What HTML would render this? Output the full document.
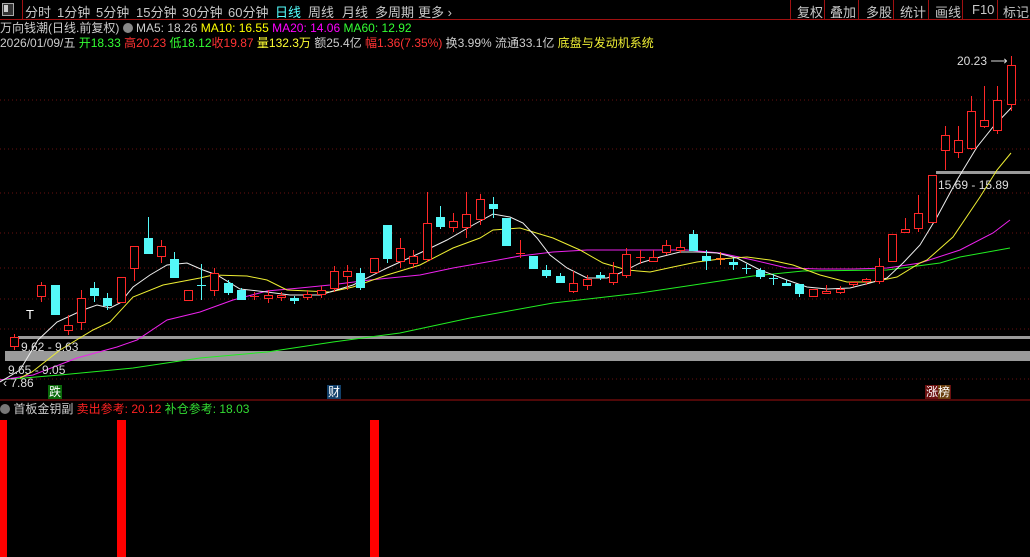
<!DOCTYPE html>
<html><head><meta charset="utf-8">
<style>
html,body{margin:0;padding:0;background:#000;width:1030px;height:557px;overflow:hidden;font-family:"Liberation Sans","Noto Sans CJK SC",sans-serif;}
.t{position:absolute;white-space:nowrap;font-size:12px;line-height:14px;}
#top{position:absolute;left:0;top:0;width:1030px;height:19px;border-bottom:1px solid #a01010;}
#top span{position:absolute;top:2px;font-size:13px;color:#c8c8c8;}
.rb{position:absolute;top:0;height:19px;border-left:1px solid #a01010;}
svg{shape-rendering:crispEdges}
</style></head><body>
<div id="top">
<div style="position:absolute;left:2px;top:3px;width:10px;height:11px;border:1px solid #aaa;background:#333"></div>
<div style="position:absolute;left:4px;top:5px;width:4px;height:7px;background:#ccc"></div>
<div class="rb" style="left:22px"></div>
<span style="left:25px">分时</span><span style="left:57px">1分钟</span><span style="left:96px">5分钟</span><span style="left:136px">15分钟</span><span style="left:182px">30分钟</span><span style="left:228px">60分钟</span><span style="left:275px;color:#5ff">日线</span><span style="left:308px">周线</span><span style="left:342px">月线</span><span style="left:375px">多周期</span><span style="left:418px">更多 ›</span>
<div class="rb" style="left:790px"></div><span style="left:797px">复权</span>
<div class="rb" style="left:824px"></div><span style="left:830px">叠加</span>
<div class="rb" style="left:858px"></div><span style="left:866px">多股</span>
<div class="rb" style="left:893px"></div><span style="left:900px">统计</span>
<div class="rb" style="left:928px"></div><span style="left:935px">画线</span>
<div class="rb" style="left:962px"></div><span style="left:972px">F10</span>
<div class="rb" style="left:997px"></div><span style="left:1003px">标记</span>
</div>
<div class="t" style="left:0;top:21px;color:#ccc">万向钱潮(日线.前复权) <span style="display:inline-block;width:10px;height:10px;border-radius:5px;background:#888;vertical-align:-1px"></span> MA5: 18.26 <span style="color:#ff0">MA10: 16.55</span> <span style="color:#f0f">MA20: 14.06</span> <span style="color:#3f3">MA60: 12.92</span></div>
<div class="t" style="left:0;top:36px;color:#ccc">2026/01/09/五 <span style="color:#3f3">开18.33</span> <span style="color:#f33">高20.23</span> <span style="color:#3f3">低18.12</span><span style="color:#f33">收19.87</span> <span style="color:#ff3">量132.3万</span> 额25.4亿 <span style="color:#f33">幅1.36(7.35%)</span> 换3.99% 流通33.1亿 <span style="color:#ee3">底盘与发动机系统</span></div>
<svg id="s" width="1030" height="557" style="position:absolute;left:0;top:0"></svg>
<div class="t" style="left:26px;top:308px;color:#fff;font-size:13px">T</div>
<div class="t" style="left:21px;top:340px;color:#ddd">9.62 - 9.63</div>
<div class="t" style="left:8px;top:363px;color:#ddd">9.65 - 9.05</div>
<div class="t" style="left:3px;top:376px;color:#ddd">‹ 7.86</div>
<div class="t" style="left:48px;top:385px;color:#fff;background:#0a6a0a;padding:0 1px">跌</div>
<div class="t" style="left:327px;top:385px;color:#fff;background:#12406a;padding:0 1px">财</div>
<div class="t" style="left:925px;top:385px;color:#fff;background:#6a1010;padding:0 1px">涨<span style="background:#6a4010">榜</span></div>
<div class="t" style="left:957px;top:54px;color:#ddd">20.23 ⟶</div>
<div class="t" style="left:938px;top:178px;color:#ddd">15.69 - 15.89</div>
<div class="t" style="left:0;top:402px;color:#ccc"><span style="display:inline-block;width:10px;height:10px;border-radius:5px;background:#777;vertical-align:-1px"></span> 首板金钥副 <span style="color:#f22">卖出参考: 20.12</span> <span style="color:#3d3">补仓参考: 18.03</span></div>
<script>
var s='';
[100,149,193,233,268,299,329,379].forEach(function(y){s+='<line x1="0" y1="'+y+'" x2="1030" y2="'+y+'" stroke="#6a1010" stroke-dasharray="1,3"/>';});
s+='<rect x="18" y="336" width="1012" height="3" fill="#9a9a9a"/>';
s+='<rect x="5" y="351" width="1025" height="10" fill="#9a9a9a"/>';
s+='<rect x="936" y="171" width="94" height="3" fill="#9a9a9a"/>';
s+='<line x1="0" y1="400" x2="1030" y2="400" stroke="#a01010"/>';
s+='<rect x="0" y="420" width="7" height="137" fill="#f00"/><rect x="117" y="420" width="9" height="137" fill="#f00"/><rect x="370" y="420" width="9" height="137" fill="#f00"/>';
function pl(pts,c){s+='<polyline fill="none" stroke="'+c+'" stroke-width="1" style="shape-rendering:auto" points="'+pts+'"/>';}
pl('0,380 60,375 133,368 200,358 267,352 333,342 400,333 470,318 553,303 640,293 687,286 753,276 803,271 887,270 940,263 960,257 1010,248','#2e2');
pl('0,380 33,375 77,358 117,347 137,340 167,320 200,312 233,300 267,291 300,288 330,285 370,280 420,275 453,268 487,262 520,256 553,252 587,250 640,250 687,250 720,253 753,260 787,268 820,269 853,269 887,268 920,263 960,250 993,233 1010,220','#e2e');
pl('20,378 32,372 60,350 93,330 110,322 133,297 163,285 200,278 213,275 247,276 267,280 287,290 330,292 353,287 387,275 420,265 453,248 480,238 493,230 520,228 553,238 580,250 603,263 627,270 650,272 673,267 697,262 720,259 747,257 770,260 793,265 820,275 847,282 873,282 897,277 920,263 927,260 953,237 980,197 997,170 1011,153','#ee3');
pl('0,382 20,370 38,340 57,322 83,310 97,305 110,308 120,303 133,287 150,275 167,265 187,263 203,270 217,275 240,289 267,292 290,295 320,295 353,285 387,268 420,253 447,240 473,225 493,214 510,217 523,223 537,238 550,255 567,268 587,278 607,278 620,273 640,263 660,257 680,252 697,252 717,253 737,258 760,270 787,280 807,287 827,289 850,288 870,283 887,278 903,263 920,245 937,217 957,180 977,147 993,127 1012,107','#eee');
var R='#ff2828',C='#54f8f8';
var c=[[14,334,337,347,350,R],[41,282,285,297,302,R],[55,285,285,315,315,C],[68,315,325,331,335,R],[81,290,298,323,330,R],[94,282,288,296,302,C],[107,293,298,306,310,C],[121,277,277,303,303,R],[134,246,246,269,281,R],[148,217,238,254,254,C],[161,240,246,257,263,R],[174,252,259,278,278,C],[188,290,290,301,301,R],[201,264,285,286,300,C],[214,268,273,291,296,R],[228,280,283,293,295,C],[241,288,290,300,300,C],[254,292,296,297,300,R],[268,290,295,299,303,R],[281,292,295,298,301,R],[294,296,298,301,304,C],[307,290,294,298,300,R],[321,286,290,295,298,R],[334,266,271,289,292,R],[347,265,271,277,290,R],[360,268,273,288,290,C],[374,258,258,273,273,R],[387,225,225,259,263,C],[400,238,248,262,268,R],[413,250,256,264,268,R],[427,192,223,260,262,R],[440,206,217,227,229,C],[453,213,221,228,232,R],[466,192,214,228,238,R],[480,194,199,220,225,R],[493,197,204,209,218,C],[506,218,218,246,246,C],[520,240,253,254,258,R],[533,256,256,269,269,C],[546,265,270,276,278,C],[560,273,276,283,283,C],[573,271,283,292,293,R],[587,275,279,286,290,R],[600,272,275,278,280,C],[613,262,273,283,285,R],[626,248,254,276,278,R],[640,250,257,258,264,R],[653,250,257,262,262,R],[666,240,245,253,255,R],[680,240,247,251,253,R],[693,230,234,251,251,C],[706,250,256,261,270,C],[720,252,258,260,265,'#ff7a20'],[733,258,262,265,270,C],[746,264,268,269,274,C],[760,268,270,277,279,C],[773,274,278,279,285,C],[786,280,283,286,286,C],[799,284,284,294,297,C],[813,289,289,297,297,R],[826,285,291,294,294,R],[840,286,289,293,294,R],[853,282,282,285,287,R],[866,278,279,282,285,R],[879,258,266,282,284,R],[892,234,234,262,262,R],[905,218,229,233,233,R],[918,195,213,229,232,R],[932,175,175,223,223,R],[945,126,135,151,170,R],[958,126,140,153,158,R],[971,96,111,149,150,R],[984,86,120,127,128,R],[997,86,100,131,134,R],[1011,56,65,105,111,R]];
c.forEach(function(k){var x=k[0],col=k[5];
s+='<rect x="'+x+'" y="'+k[1]+'" width="1" height="'+(k[4]-k[1])+'" fill="'+col+'"/>';
var h=Math.max(k[3]-k[2],1);
if(col==C) s+='<rect x="'+(x-4)+'" y="'+k[2]+'" width="9" height="'+h+'" fill="'+C+'"/>';
else if(h<=2) s+='<rect x="'+(x-4)+'" y="'+k[2]+'" width="9" height="'+h+'" fill="'+col+'"/>';
else s+='<rect x="'+(x-4)+'" y="'+k[2]+'" width="9" height="'+h+'" fill="'+col+'"/><rect x="'+(x-3)+'" y="'+(k[2]+1)+'" width="7" height="'+(h-2)+'" fill="#000"/>';});
document.getElementById('s').innerHTML=s;
</script>
</body></html>
